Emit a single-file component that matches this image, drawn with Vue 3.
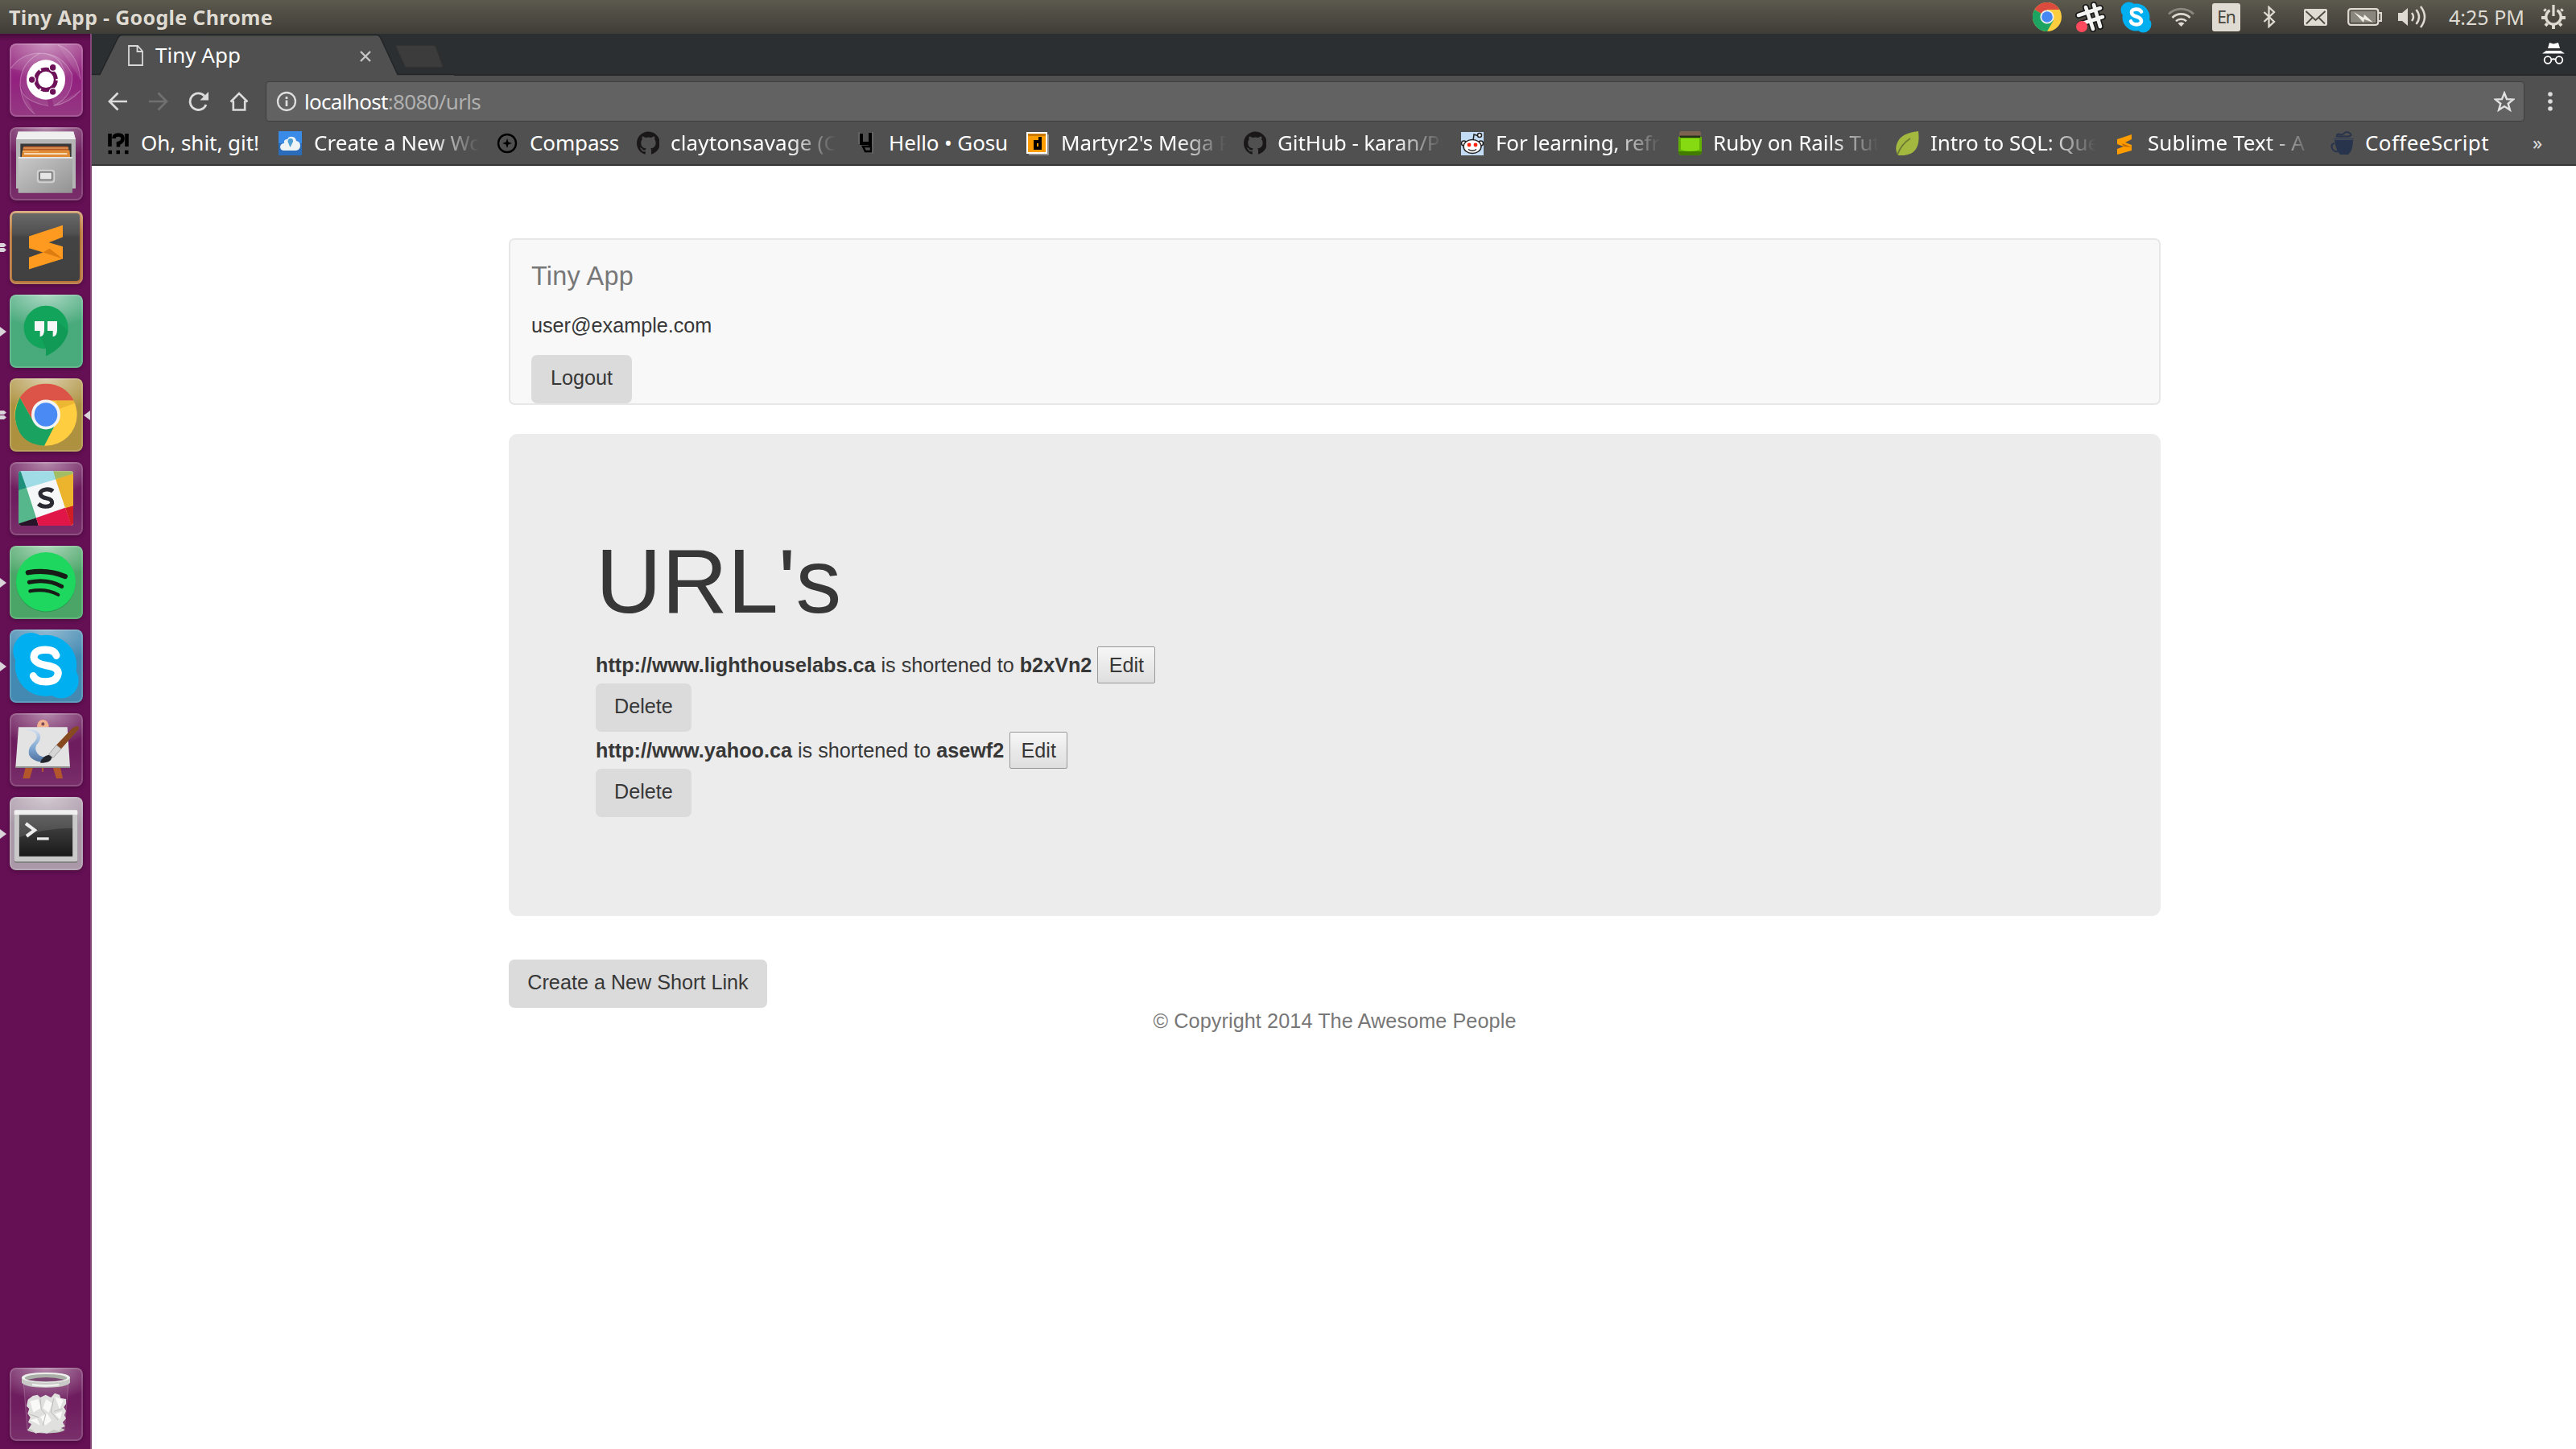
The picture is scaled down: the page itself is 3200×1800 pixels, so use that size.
<script setup>
const bookmarks = [
  { icon: 'bang', label: 'Oh, shit, git!', slot: 215, text: 147 },
  { icon: 'cloud', label: 'Create a New Wo', slot: 268, text: 209, cut: true },
  { icon: 'compass', label: 'Compass', slot: 175, text: 111 },
  { icon: 'github', label: 'claytonsavage (Cl', slot: 271, text: 214, cut: true },
  { icon: 'gosu', label: 'Hello • Gosu', slot: 214, text: 148 },
  { icon: 'dic', label: "Martyr2's Mega P", slot: 269, text: 212, cut: true },
  { icon: 'github', label: 'GitHub - karan/Pr', slot: 271, text: 212, cut: true },
  { icon: 'reddit', label: 'For learning, refr', slot: 270, text: 204, cut: true },
  { icon: 'jar', label: 'Ruby on Rails Tut', slot: 270, text: 208, cut: true },
  { icon: 'leaf', label: 'Intro to SQL: Que', slot: 270, text: 210, cut: true },
  { icon: 'sublime', label: 'Sublime Text - A', slot: 270, text: 195, cut: true },
  { icon: 'coffee', label: 'CoffeeScript', slot: 240, text: 154 },
]

const urls = [
  { long: 'http://www.lighthouselabs.ca', short: 'b2xVn2' },
  { long: 'http://www.yahoo.ca', short: 'asewf2' },
]

// Spreads a label's letters so that it takes exactly the given width.
const vFit = {
  mounted(el, { value }) {
    const natural = el.getBoundingClientRect().width
    el.style.letterSpacing = (value - natural) / el.textContent.length + 'px'
  },
}
</script>

<template>
  <div class="desktop">
    <header class="panel">
      <div class="panel-title"><span v-fit="328">Tiny App - Google Chrome</span></div>
      <div class="indicators">
        <svg class="i-chrome" viewBox="0 0 36 36">
          <circle cx="18" cy="18" r="18" fill="#fccd3e" />
          <path d="M18 18 2.4 9A18 18 0 0 1 33.6 9H18z" fill="#dc4b3e" />
          <path d="M2.4 9A18 18 0 0 0 18 36l7.8-13.5L18 18z" fill="#1da462" />
          <circle cx="18" cy="18" r="8.6" fill="#eee" />
          <circle cx="18" cy="18" r="6.8" fill="#4587f3" />
        </svg>
        <svg class="i-slack" viewBox="0 0 38 38">
          <g stroke-linecap="round" fill="none">
            <path d="M13 7l9 27M23 4l8 27M4 17l27-9M6 28l28-9" stroke="#1a1a1a" stroke-width="8" />
            <path d="M13 7l9 27M23 4l8 27M4 17l27-9M6 28l28-9" stroke="#f4f4f2" stroke-width="4.6" />
          </g>
          <circle cx="8" cy="31" r="7" fill="#ff4a5e" />
        </svg>
        <svg class="i-skype" viewBox="0 0 39 39">
          <circle cx="19.500" cy="19.500" r="17" fill="#00aff0" />
          <circle cx="10.500" cy="10.500" r="10" fill="#00aff0" />
          <circle cx="28.500" cy="28.500" r="10" fill="#00aff0" />
          <path d="M26 12.500c-2-4-12-4.500-12 1 0 6.500 12 3.500 12 10.500 0 6-11 5.500-13 .5" fill="none" stroke="#fff" stroke-width="4.600" stroke-linecap="round" />
        </svg>
        <svg class="i-wifi" viewBox="0 0 33 24" fill="none" stroke="#dfdbd2" stroke-width="2.600">
          <path d="M1 8.500a22 22 0 0 1 31 0" stroke="#8b887f" />
          <path d="M5.500 13a15.500 15.500 0 0 1 22 0M10 17.300a9.500 9.500 0 0 1 13 0" />
          <path d="M16.500 24l-4-4a6 6 0 0 1 8 0z" fill="#dfdbd2" stroke="none" />
        </svg>
        <span class="i-lang">En</span>
        <svg class="i-bt" viewBox="0 0 16 28" fill="none" stroke="#dfdbd2" stroke-width="2.300">
          <path d="M1.500 8l12.500 12-6.500 6V2L14 8 1.500 20" />
        </svg>
        <svg class="i-mail" viewBox="0 0 29 21">
          <rect width="29" height="21" rx="2" fill="#dfdbd2" />
          <path d="M2.500 3l12 11L26.500 3M3 18.500l8-8M26 18.500l-8-8" fill="none" stroke="#4b4941" stroke-width="1.800" />
        </svg>
        <svg class="i-bat" viewBox="0 0 43 22">
          <rect x="1.200" y="1.200" width="37" height="19.600" rx="3" fill="none" stroke="#dfdbd2" stroke-width="2.200" />
          <rect x="4" y="4" width="31.500" height="14" fill="#89867d" />
          <path d="M39 6h3v10h-3" fill="none" stroke="#dfdbd2" stroke-width="2" />
          <path d="M8 5l12 7 1-4 11 10-11-4-1 4z" fill="#eeebe3" />
        </svg>
        <svg class="i-vol" viewBox="0 0 35 30" fill="none" stroke="#dfdbd2" stroke-width="2.500">
          <path d="M0 10h5l7-6v22l-7-6H0z" fill="#dfdbd2" stroke="none" />
          <path d="M17 10q4 5 0 10M22.500 6q7 9 0 18M28 2q10 13 0 26" />
        </svg>
        <span class="clock"><span v-fit="94">4:25 PM</span></span>
        <svg class="i-gear" viewBox="0 0 30 30" fill="none" stroke="#dfdbd2">
          <path d="M10.500 6.700a9.300 9.300 0 1 0 9 0" stroke-width="3.400" />
          <path d="M15 0v14" stroke-width="3.200" />
          <path d="M5.500 7.500l-2-2M24.500 7.500l2-2M5 16H0M25 16h5M7.500 23l-2.500 3M22.500 23l2.500 3M15 25v5" stroke-width="3.800" />
        </svg>
      </div>
    </header>

    <div class="workspace">
      <aside class="launcher">
        <svg class="tile dash" viewBox="36 40 273 265" preserveAspectRatio="none">
          <path d="M40 130Q80 75 150 75 240 80 242 170M150 75Q230 75 268 150 275 235 200 264M180 266Q80 250 75 190 75 110 150 75M75 190Q80 260 130 295M200 266Q260 255 300 210M300 170Q290 70 215 45" fill="#ffffff18" stroke="#ffffff48" stroke-width="3" />
          <circle cx="171" cy="171" r="72" fill="#fff" />
          <circle cx="171" cy="171" r="37" fill="none" stroke="#6d1259" stroke-width="15" />
          <path d="M208 171h12M152 139l-7-12M152 203l-7 12" stroke="#fff" stroke-width="6" />
          <g fill="#6d1259" stroke="#fff" stroke-width="4">
            <circle cx="119" cy="171" r="13" /><circle cx="197" cy="127" r="13" /><circle cx="197" cy="215" r="13" />
          </g>
        </svg>

        <svg class="tile files" viewBox="36 342 273 265" preserveAspectRatio="none">
          <defs>
            <linearGradient id="steel" x1="0" y1="0" x2="1" y2="1"><stop offset="0" stop-color="#c9c9c9" /><stop offset=".4" stop-color="#b4b4b4" /><stop offset="1" stop-color="#929292" /></linearGradient>
          </defs>
          <path d="M68 358h206l8 30v176H60V388z" fill="#b5b5b5" />
          <path d="M68 358h206l8 28H60z" fill="#efefef" />
          <path d="M76 402h190v60H76z" fill="#383838" />
          <path d="M88 411h165l8 45H80z" fill="#b65a2c" />
          <path d="M84 425h175l3 30H80z" fill="#e08b35" />
          <path d="M90 438h160" stroke="#fff1df" stroke-width="4" />
          <path d="M86 418h170M84 430h60" stroke="#f3b96d" stroke-width="3" />
          <path d="M68 450h202v130H68z" fill="url(#steel)" />
          <path d="M68 452h202" stroke="#e6e6e6" stroke-width="5" />
          <rect x="140" y="498" width="62" height="43" rx="9" fill="#aaa" stroke="#d4d4d4" stroke-width="5" />
          <rect x="148" y="505" width="46" height="27" rx="3" fill="#e6e6e6" stroke="#555" stroke-width="3" />
        </svg>

        <div class="slot">
          <svg class="tile sublime" viewBox="36 644 273 265" preserveAspectRatio="none">
            <defs><linearGradient id="subl" x1="0" y1="0" x2="0" y2="1"><stop offset="0" stop-color="#686868" /><stop offset=".3" stop-color="#505050" /><stop offset=".35" stop-color="#444" /><stop offset="1" stop-color="#404040" /></linearGradient></defs>
            <rect x="45" y="653" width="252" height="244" rx="12" fill="url(#subl)" />
            <path d="M108 736l126-40v43l-52 19 52 15v44l-126 38v-43l52-18-52-15z" fill="#ff9a20" />
            <path d="M160 794l25-14 49 37z" fill="#dd7c10" />
          </svg>
          <svg class="pip" viewBox="0 0 8 12"><path d="M0 0h5l3 2.500-3 2.500H0zM0 6h5l3 2.500-3 2.500H0z" fill="#d9d2d8" /></svg>
        </div>

        <div class="slot">
          <svg class="tile hangouts" viewBox="36 946 273 265" preserveAspectRatio="none">
            <path d="M171 986c46 0 83 37 83 80 0 50-45 86-83 102v-26c-46 0-82-33-82-76s36-80 82-80z" fill="#13a45b" />
            <path d="M213 1042l41 35q-10 55-83 91v-26l-20-47z" fill="#0d8f50" opacity=".5" />
            <path d="M129 1042h36v32q0 22-16 24v-21h-20zM177 1042h36v32q0 22-16 24v-21h-20z" fill="#f6f6f6" />
          </svg>
          <svg class="pip" viewBox="0 0 8 12"><path d="M0 0l8 6-8 6z" fill="#d9d2d8" /></svg>
        </div>

        <div class="slot">
          <svg class="tile chrome" viewBox="36 1248 273 265" preserveAspectRatio="none">
            <ellipse cx="171" cy="1380" rx="116" ry="112" fill="#ffcd40" />
            <path d="M74 1318Q108 1268 171 1268 240 1268 275 1328H171L122 1400z" fill="#dc5347" />
            <path d="M74 1318Q48 1365 60 1412 80 1488 165 1492L206 1415 171 1395 122 1400z" fill="#1aa260" />
            <path d="M206 1328h69l3 10-55 20z" fill="#e0a92c" opacity=".6" />
            <circle cx="171" cy="1379" r="54" fill="#f3f3f3" />
            <circle cx="171" cy="1379" r="43" fill="#4a8af4" />
          </svg>
          <svg class="pip" viewBox="0 0 8 12"><path d="M0 0h5l3 2.500-3 2.500H0zM0 6h5l3 2.500-3 2.500H0z" fill="#d9d2d8" /></svg>
          <svg class="pip focus" viewBox="0 0 8 12"><path d="M8 0L0 6l8 6z" fill="#d9d2d8" /></svg>
        </div>

        <svg class="tile slack" viewBox="36 40 273 265" preserveAspectRatio="none">
          <defs><clipPath id="sq"><rect x="69" y="73" width="204" height="197" rx="10" /></clipPath></defs>
          <g clip-path="url(#sq)">
            <path d="M60 60h220v220H60z" fill="#f5f7f8" />
            <path d="M76 70h126l8 32-111 32z" fill="#9fdce5" />
            <path d="M66 70h10l23 64-33 10z" fill="#1d8f7b" />
            <path d="M66 143l33-9 36 108-69 24z" fill="#56b68c" />
            <path d="M66 264l69-22 10 32H66z" fill="#281428" />
            <path d="M135 242l108-37 26 70H145z" fill="#e01648" />
            <path d="M243 205l34-9v80h-9z" fill="#d01c25" />
            <path d="M207 101l70-22v118l-34 9z" fill="#ecb32d" />
            <path d="M198 70h79v11l-70 21z" fill="#a3bd65" />
          </g>
          <path d="M197 146q-9-9-26-7-21 3-21 16 2 12 24 16 22 4 20 18-4 12-24 12-18-1-27-10" fill="none" stroke="#2b2a33" stroke-width="15" />
        </svg>

        <div class="slot">
          <svg class="tile spotify" viewBox="36 342 273 265" preserveAspectRatio="none">
            <ellipse cx="171" cy="475" rx="111" ry="107" fill="#1a8f46" opacity=".6" />
            <ellipse cx="171" cy="472" rx="111" ry="107" fill="#1ed75f" />
            <g fill="none" stroke="#171c17" stroke-linecap="round">
              <path d="M104 439Q180 426 243 453" stroke-width="18" />
              <path d="M109 474Q175 460 230 489" stroke-width="15" />
              <path d="M112 506Q170 495 217 519" stroke-width="12" />
            </g>
          </svg>
          <svg class="pip" viewBox="0 0 8 12"><path d="M0 0l8 6-8 6z" fill="#d9d2d8" /></svg>
        </div>

        <div class="slot">
          <svg class="tile skype" viewBox="36 644 273 265" preserveAspectRatio="none">
            <g fill="#00aff0">
              <ellipse cx="171" cy="775" rx="115" ry="111" />
              <circle cx="115" cy="722" r="66" />
              <circle cx="228" cy="828" r="65" />
            </g>
            <path d="M210 738Q203 717 169 717 126 718 126 745 128 766 172 774 217 780 217 803 212 833 171 833 134 833 124 812" fill="none" stroke="#fff" stroke-width="27" stroke-linecap="round" />
          </svg>
          <svg class="pip" viewBox="0 0 8 12"><path d="M0 0l8 6-8 6z" fill="#d9d2d8" /></svg>
        </div>

        <svg class="tile paint" viewBox="36 946 273 265" preserveAspectRatio="none">
          <defs>
            <linearGradient id="stroke" x1="0" y1="0" x2="0" y2="1"><stop offset="0" stop-color="#d3e0f0" /><stop offset=".6" stop-color="#7ba3cf" /><stop offset="1" stop-color="#4d6f9a" /></linearGradient>
          </defs>
          <path d="M95 1142h28l-12 40H85zM197 1142h28l9 40h-24zM156 1142h6v16h-6z" fill="#b4562b" />
          <path d="M138 998q0-28 22-29 22 1 22 29z" fill="#f3b08d" />
          <circle cx="160" cy="985" r="6" fill="#7a4a55" />
          <path d="M69 996h182l10 146H58z" fill="#e3e3e3" />
          <path d="M58 1138h203v6H58z" fill="#8d8d8d" />
          <path d="M90 1004Q140 1000 150 1025 152 1045 136 1060 126 1080 146 1098 160 1106 180 1104L168 1124Q120 1122 108 1096 102 1070 128 1050 146 1030 130 1015 112 1006 90 1004z" fill="url(#stroke)" />
          <path d="M290 993q8 6 0 14l-62 68-18-14 60-61q14-9 20-7z" fill="#87491f" />
          <path d="M210 1061l18 14-30 32-16-12z" fill="#d5d5d5" stroke="#888" stroke-width="2" />
          <path d="M182 1097l12 8q-6 24-44 20 6-22 32-28z" fill="#22262c" />
        </svg>

        <div class="slot">
          <svg class="tile term" viewBox="36 1248 273 265" preserveAspectRatio="none">
            <defs>
              <linearGradient id="scr" x1="0" y1="0" x2="0" y2="1"><stop offset="0" stop-color="#4c4c4c" /><stop offset="1" stop-color="#191919" /></linearGradient>
            </defs>
            <rect x="53" y="1297" width="236" height="189" rx="6" fill="#777" />
            <rect x="53" y="1295" width="236" height="187" rx="6" fill="#c9c9c9" />
            <path d="M58 1295h226q5 0 5 6v11H53v-11q0-6 5-6z" fill="#f0f0f0" />
            <rect x="70" y="1312" width="202" height="152" fill="url(#scr)" stroke="#ddd" stroke-width="2" />
            <path d="M71 1313h200v48Q160 1362 71 1394z" fill="#fff" opacity=".12" />
            <path d="M96 1344l33 24-30 22" fill="none" stroke="#eee" stroke-width="12" />
            <path d="M138 1399h44" stroke="#eee" stroke-width="9" />
          </svg>
          <svg class="pip" viewBox="0 0 8 12"><path d="M0 0l8 6-8 6z" fill="#d9d2d8" /></svg>
        </div>

        <svg class="tile trash" viewBox="36 117 273 273" preserveAspectRatio="none">
          <path d="M88 175l14 175q70 22 138 0l15-175" fill="#ffffff12" stroke="#ffffff50" stroke-width="2" />
          <ellipse cx="171" cy="349" rx="69" ry="12" fill="#c3c6c0" />
          <path d="M104 236l18-14 18-4 10 10 20-10 20 10 14-16 18 6 4 12 20 4 0 18-8 12 8 14-6 16 6 12-12 14 8 16-14 6-8 12-21-6-24 14-22-6-20 6-14-14-12-4 10-16-12-8 8-18-10-14 6-18-10-10z" fill="#e0e1de" />
          <path d="M112 242l30-8 10 34-28 16zM172 234l22 16-12 34-22-16zM206 226l30 12-14 34zM150 300l26-12 16 26-24 18zM204 290l28-10-8 30zM112 312l26-6 12 26z" fill="#f9f9f8" />
          <path d="M150 232l4 40 16 20-10 40M200 232l-10 50 26 30M108 290l36 12M232 270l-30 10" fill="none" stroke="#b9bcb6" stroke-width="3" />
          <path d="M81 155q0-20 90-20t90 20v17q-8 19-90 19t-90-19z" fill="#c8c8c6" />
          <ellipse cx="171" cy="154" rx="90" ry="19" fill="#f0f0ee" />
          <ellipse cx="171" cy="155" rx="79" ry="14" fill="#aab0a8" />
          <path d="M102 162q70-18 138 0-69 14-138 0z" fill="#7b4773" />
          <path d="M120 180q50 8 100 0" stroke="#fff" stroke-width="8" fill="none" opacity=".7" />
        </svg>
      </aside>

      <div class="window">
        <div class="tabstrip">
          <svg class="tab-shape" viewBox="0 0 450 52">
            <path d="M0 51h10L32 6q2-4.500 6-4.500h316q3 0 5 4l21 45.500h70v1H0z" fill="#505050" />
            <path d="M0 50.500h10L32 6q2-4.500 6-4.500h316q3 0 5 4l21 45h70" fill="none" stroke="#222527" stroke-width="1.500" />
            <path d="M379 14h45q3 0 4 3l8 22q1 3-2 3h-42q-3 0-4-3l-10-22q-1-3 1-3z" fill="#3c3c3c" stroke="#303030" stroke-width="1.500" />
          </svg>
          <div class="tab">
            <svg class="page-icon" viewBox="0 0 19 26" fill="none" stroke="#d8d8d8" stroke-width="1.800"><path d="M1 1h11l6 6.500V25H1zM11.500 1v7H18" /></svg>
            <span class="tab-title"><span v-fit="106">Tiny App</span></span>
            <svg class="tab-close" viewBox="0 0 14 14"><path d="M1 1l12 12M13 1L1 13" stroke="#c6c6c6" stroke-width="2.400" /></svg>
          </div>
          <svg class="incognito" viewBox="0 0 29 27" fill="#fff">
            <path d="M9 0l5 1.500L20 0l2 7H7zM5 10h18l5 3.500H0z" />
            <g fill="none" stroke="#fff" stroke-width="1.800"><circle cx="7" cy="21.500" r="4.300" /><circle cx="21" cy="21.500" r="4.300" /><path d="M11.500 21q2.500-1.500 5 0" /></g>
          </svg>
        </div>

        <div class="toolbar">
          <svg class="nav back" viewBox="0 0 24 24" fill="none" stroke="#dcdcdc" stroke-width="2.700"><path d="M24 12H2M12.500 1.500L2 12l10.500 10.500" /></svg>
          <svg class="nav forward" viewBox="0 0 24 24" fill="none" stroke="#707070" stroke-width="2.700"><path d="M0 12h22M11.500 1.500L22 12 11.500 22.500" /></svg>
          <svg class="nav reload" viewBox="0 0 26 24"><path d="M20 5.200A10.300 10.300 0 1 0 22 16" fill="none" stroke="#dcdcdc" stroke-width="2.800" /><path d="M25 0v10.500H14.500z" fill="#dcdcdc" /></svg>
          <svg class="nav home" viewBox="0 0 24 24" fill="none" stroke="#dcdcdc" stroke-width="2.600"><path d="M1.500 12.500L12 2l10.500 10.500M4.800 11v11.500h14.400V11" /></svg>
          <div class="omnibox">
            <svg class="info" viewBox="0 0 26 26"><circle cx="13" cy="13" r="11" fill="none" stroke="#dedede" stroke-width="2.300" /><path d="M13 11.500v7.500M13 7v3" stroke="#dedede" stroke-width="2.700" /></svg>
            <span class="url"><span v-fit="219"><b>localhost</b>:8080/urls</span></span>
            <svg class="star" viewBox="0 0 26 26"><path d="M13 2.500l3 7.600 8 .5-6.300 5.100 2.200 7.900-6.900-4.500-6.900 4.500 2.200-7.900L2 10.600l8-.5z" fill="none" stroke="#e2e2e2" stroke-width="2.400" /></svg>
          </div>
          <svg class="menu" viewBox="0 0 6 24" fill="#dcdcdc"><circle cx="3" cy="3" r="2.800" /><circle cx="3" cy="12" r="2.800" /><circle cx="3" cy="21" r="2.800" /></svg>
        </div>

        <div class="bookmarks">
          <div v-for="(b, i) in bookmarks" :key="i" class="bookmark" :style="{ width: b.slot + 'px' }">
            <svg class="favicon" viewBox="0 0 30 30">
              <g v-if="b.icon === 'bang'" fill="none" stroke="#000" stroke-width="4.600">
                <path d="M5.500 3v16M26.500 3v16M10.500 9q0-4.500 5.500-4.500t5.500 4.500-5.500 6v4.500M3.500 26h4.500M13.500 26h4.500M24 26h4.500" />
              </g>
              <g v-else-if="b.icon === 'cloud'">
                <path d="M0 0h29v15H0z" fill="#3a8ae8" /><path d="M0 15h29v15H0z" fill="#2a6cba" />
                <path d="M7 24q-5 0-5-5 1-4 5-4-1-5 4-5 2-4 6-3 4 0 5 5 5 1 5 6t-5 6z" fill="#eef3f5" />
                <path d="M14.500 20l-3-7q0-4 3.500-4t3 4z" fill="#4c9ed2" />
              </g>
              <g v-else-if="b.icon === 'compass'" stroke="#000" stroke-width="2.400" fill="none">
                <circle cx="16" cy="15" r="11" /><path d="M16 9l1.500 4.500L22 15l-4.500 1.500L16 21l-1.500-4.500L10 15l4.500-1.500z" fill="#000" stroke="none" />
              </g>
              <path v-else-if="b.icon === 'github'" transform="translate(2 .5) scale(1.800)" fill="#191717" d="M8 0C3.580 0 0 3.580 0 8c0 3.540 2.290 6.530 5.470 7.590.4.070.55-.17.55-.38 0-.19-.01-.82-.01-1.490-2.010.37-2.530-.49-2.690-.94-.09-.23-.48-.94-.82-1.130-.28-.15-.68-.52-.01-.53.63-.01 1.080.58 1.230.82.72 1.210 1.870.87 2.330.66.07-.52.28-.87.51-1.070-1.780-.2-3.640-.89-3.640-3.950 0-.87.31-1.590.82-2.150-.08-.2-.36-1.020.08-2.120 0 0 .67-.21 2.200.82a7.600 7.600 0 0 1 4 0c1.530-1.040 2.200-.82 2.200-.82.44 1.100.16 1.920.08 2.120.51.56.82 1.270.82 2.150 0 3.070-1.870 3.750-3.650 3.950.29.25.54.73.54 1.480 0 1.070-.01 1.930-.01 2.200 0 .21.15.46.55.38A8.010 8.010 0 0 0 16 8c0-4.420-3.580-8-8-8z" />
              <g v-else-if="b.icon === 'gosu'" fill="none" stroke="#000" stroke-width="4">
                <path d="M10 3v12h10M21 2v17" /><path d="M12 19l3 6h7v-6z" stroke-width="2.500" /><path d="M7 1v15M24 1v27" stroke="#777" stroke-width="1" />
              </g>
              <g v-else-if="b.icon === 'dic'">
                <path d="M4 4h25v26H4z" fill="#8e8e8e" /><path d="M1 1h26v27H1z" fill="#fff" /><path d="M3 3h22v23H3z" fill="#ff9c00" />
                <path d="M3 3h22v3H3z" fill="#c97800" />
                <path d="M18 7v16M18 13h-6v8h6" fill="none" stroke="#000" stroke-width="4" />
              </g>
              <g v-else-if="b.icon === 'reddit'">
                <path d="M1 1h28v29H1z" fill="#c3dcf5" />
                <path d="M16 12l1-8 6 2" fill="none" stroke="#222" stroke-width="1.500" />
                <g fill="#fff" stroke="#222" stroke-width="1.500"><circle cx="24" cy="5" r="2.500" /><circle cx="4.500" cy="15" r="3" /><circle cx="25.500" cy="15" r="3" /><ellipse cx="15" cy="19" rx="11" ry="8.500" /></g>
                <circle cx="11" cy="17" r="2.400" fill="#f21" /><circle cx="19" cy="17" r="2.400" fill="#f21" />
                <path d="M10 22.500q5 3.500 10 0" fill="none" stroke="#222" stroke-width="1.500" />
              </g>
              <g v-else-if="b.icon === 'jar'">
                <path d="M1 7h29v20q-2 3-5 3H6q-4 0-5-3z" fill="#62b000" />
                <rect x="2" y="0" width="27" height="7" rx="3" fill="#7e6250" /><path d="M3 5.500h25V8H3z" fill="#26301a" />
                <path d="M4 9h23v14q-12 4-23 0z" fill="#86da12" />
                <path d="M1 25h29v2q-2 3-5 3H6q-4 0-5-3z" fill="#417c00" />
              </g>
              <g v-else-if="b.icon === 'leaf'">
                <path d="M29 0q3 22-10 28-8 3-15 2-5-7-1-16Q8 2 29 0z" fill="#a3b83f" /><path d="M19 9Q8 16 3 29" fill="none" stroke="#6c7c34" stroke-width="2" />
              </g>
              <g v-else-if="b.icon === 'sublime'">
                <path d="M6 10l18-6v6l-8 4 8 3v7L6 29v-7l8-3-8-3z" fill="#ff9c00" /><path d="M12 15l12 5-10-1z" fill="#c46a00" />
              </g>
              <g v-else fill="#28334c">
                <path d="M6 11h23q0 13-6 18H13q-5-4-7-18z" /><path d="M5 9.500h25" stroke="#3a4257" stroke-width="2" />
                <path d="M9 6.500q-1-3 3-3 3 2 6-1t7 0-2 4z" fill="none" stroke="#28334c" stroke-width="1.800" />
                <path d="M6 15q-5 1-3 6t7 4" fill="none" stroke="#28334c" stroke-width="2" />
              </g>
            </svg>
            <span class="bm-text" :class="{ cut: b.cut }"><span v-fit="b.text">{{ b.label }}</span></span>
          </div>
          <span class="more">»</span>
        </div>

        <main class="page">
          <nav class="navbar">
            <div class="brand"><span v-fit="127">Tiny App</span></div>
            <div class="user">user@example.com</div>
            <button class="btn logout">Logout</button>
          </nav>
          <section class="jumbotron">
            <h1>URL's</h1>
            <div v-for="u in urls" :key="u.short" class="entry">
              <div class="line"><span class="phrase"><strong>{{ u.long }}</strong> is shortened to <strong>{{ u.short }}</strong></span><button class="edit">Edit</button></div>
              <button class="btn">Delete</button>
            </div>
          </section>
          <button class="btn create">Create a New Short Link</button>
          <footer class="copyright"><span v-fit="451">© Copyright 2014 The Awesome People</span></footer>
        </main>
      </div>
    </div>
  </div>
</template>

<style>
body { background: #fff; overflow: hidden; }
</style>

<style scoped>
* { box-sizing: border-box; }
svg { display: block; flex: none; }
.desktop { width: 3200px; height: 1800px; display: flex; flex-direction: column; overflow: hidden; font-family: "Noto Sans", "Open Sans", sans-serif; font-size: 26px; white-space: nowrap; }
.panel { height: 42px; flex: none; display: flex; align-items: center; justify-content: space-between; background: linear-gradient(#5c594e, #3f3d37); color: #dfdbd2; padding: 0 13px 0 11px; }
.panel-title { font-weight: 700; font-size: 25px; line-height: 42px; text-shadow: 0 -1px 0 #33322c; }
.indicators { display: flex; align-items: center; height: 42px; }
.i-chrome { width: 36px; height: 36px; }
.i-slack { width: 38px; height: 38px; margin-left: 17px; }
.i-skype { width: 39px; height: 39px; margin-left: 18px; }
.i-wifi { width: 33px; height: 24px; margin-left: 20px; }
.i-lang { width: 35px; height: 35px; margin-left: 22px; border-radius: 3px; background: #dfdbd2; color: #45433b; font-size: 21px; line-height: 35px; text-align: center; letter-spacing: -1px; }
.i-bt { width: 16px; height: 28px; margin-left: 28px; }
.i-mail { width: 29px; height: 21px; margin-left: 35px; }
.i-bat { width: 43px; height: 22px; margin-left: 25px; }
.i-vol { width: 35px; height: 30px; margin-left: 20px; }
.clock { width: 94px; margin-left: 28px; font-size: 25px; }
.i-gear { width: 30px; height: 30px; margin-left: 21px; }

.workspace { flex: 1; display: flex; min-height: 0; }
.launcher { width: 114px; flex: none; background: linear-gradient(#480b3b, #650f54 9px); border-right: 2px solid #83497a; display: flex; flex-direction: column; align-items: center; gap: 13px; padding: 12px 0 10px 3px; }
.slot { position: relative; width: 100%; display: flex; justify-content: center; }
.tile { width: 91px; height: 91px; border-radius: 8px; box-shadow: inset 0 0 0 2px #ffffff28, 0 2px 5px #00000040; background: radial-gradient(ellipse 75% 45% at 50% 0, #ffffff80, #ffffff08), linear-gradient(#ffffff08 50%, #ffffff1c); }
.dash { background: radial-gradient(ellipse 75% 50% at 50% 0, #ffffff80, #ffffff10), linear-gradient(#96287d, #8b1276 50%, #8e2d7a); }
.sublime { background: linear-gradient(#d2a172, #b87436 30%, #b67239); }
.hangouts { background: radial-gradient(ellipse 80% 45% at 50% 0, #ffffff90, #ffffff08), #43a778; }
.chrome { background: radial-gradient(ellipse 80% 45% at 50% 0, #ffffff90, #ffffff08), #ab8e3a; }
.spotify { background: radial-gradient(ellipse 80% 45% at 50% 0, #ffffff90, #ffffff08), #44a262; }
.skype { background: radial-gradient(ellipse 80% 45% at 50% 0, #ffffff70, #ffffff08), #3d85ae; }
.term { background: radial-gradient(ellipse 80% 45% at 50% 0, #ffffff80, #ffffff08), #a795a5; }
.trash { margin-top: auto; }
.pip { position: absolute; left: -3px; top: 40px; width: 8px; height: 12px; }
.pip.focus { left: auto; right: 0; }

.window { flex: 1; display: flex; flex-direction: column; min-width: 0; }
.tabstrip { position: relative; height: 52px; flex: none; background: #2b2f32; display: flex; align-items: center; justify-content: space-between; box-shadow: inset 0 -1.500px #222527; }
.tab-shape { position: absolute; left: 0; top: 0; width: 450px; height: 52px; }
.tab { position: relative; width: 380px; height: 52px; display: flex; align-items: center; padding-left: 45px; color: #fff; }
.page-icon { width: 19px; height: 26px; margin-top: 2px; }
.tab-title { margin-left: 15px; width: 241px; line-height: 52px; }
.tab-close { width: 14px; height: 14px; margin-left: 13px; margin-top: 3px; }
.incognito { width: 29px; height: 27px; margin: -3px 13px 0 0; }
.toolbar { height: 64px; flex: none; background: #505050; display: flex; align-items: center; padding: 0 29px 0 20px; }
.nav { height: 24px; width: 24px; }
.forward { margin-left: 27px; }
.reload { width: 26px; margin-left: 25px; }
.home { margin-left: 25px; }
.omnibox { margin-left: 21px; flex: 1; height: 50px; border: 1px solid #3d3d3d; border-radius: 4px; background: #626262; display: flex; align-items: center; padding: 0 11px 0 12px; }
.info { width: 26px; height: 26px; }
.url { margin-left: 9px; flex: 1; color: #b0b0b0; line-height: 46px; padding-bottom: 1px; }
.url b { font-weight: 400; color: #fff; }
.star { width: 26px; height: 26px; }
.menu { width: 6px; height: 24px; margin-left: 29px; }
.bookmarks { height: 48px; flex: none; background: #505050; border-bottom: 2px solid #353535; display: flex; align-items: center; padding: 0 0 6px 17px; color: #fff; }
.bookmark { display: flex; align-items: center; flex: none; }
.favicon { width: 30px; height: 30px; margin-right: 14px; }
.bm-text { line-height: 38px; padding-bottom: 2px; }
.bm-text.cut { width: 220px; -webkit-mask-image: linear-gradient(90deg, #000 145px, transparent 205px); mask-image: linear-gradient(90deg, #000 145px, transparent 205px); }
.more { margin-left: 12px; color: #ddd; font-size: 24px; line-height: 38px; padding-bottom: 2px; }

.page { flex: 1; background: #fff; padding: 90px 516px 0 518px; display: flex; flex-direction: column; align-items: flex-start; color: #373737; font: 25.200px/36px "Liberation Sans", Arial, sans-serif; }
.btn { display: block; height: 60px; padding: 0 23px 4px; border: 0; border-radius: 7px; background: #dbdbdb; color: #373737; font: inherit; }
.logout { padding: 0 24px 4px; }
.navbar { width: 100%; height: 207px; border: 2px solid #e7e7e7; border-radius: 7px; background: #f8f8f8; padding: 27px 26px 0; }
.brand { font-size: 32.400px; line-height: 36px; color: #777; }
.user { margin-top: 26px; line-height: 34px; margin-bottom: 20px; }
.jumbotron { width: 100%; height: 599px; margin-top: 36px; padding: 120px 108px 0; border-radius: 11px; background: #ececec; }
h1 { margin: 0; font-size: 113.400px; line-height: 126px; font-weight: 400; height: 144px; }
.line { display: flex; align-items: center; height: 46px; }
.phrase { padding-bottom: 1px; }
.edit { width: 72px; height: 46px; margin-left: 7px; padding: 0 0 1px; border: 1.500px solid #999; border-radius: 2px; background: linear-gradient(#f6f6f6, #dedede); color: #373737; font: inherit; }
.create { margin-top: 54px; width: 321px; }
.copyright { align-self: center; color: #777; line-height: 32px; }
</style>
